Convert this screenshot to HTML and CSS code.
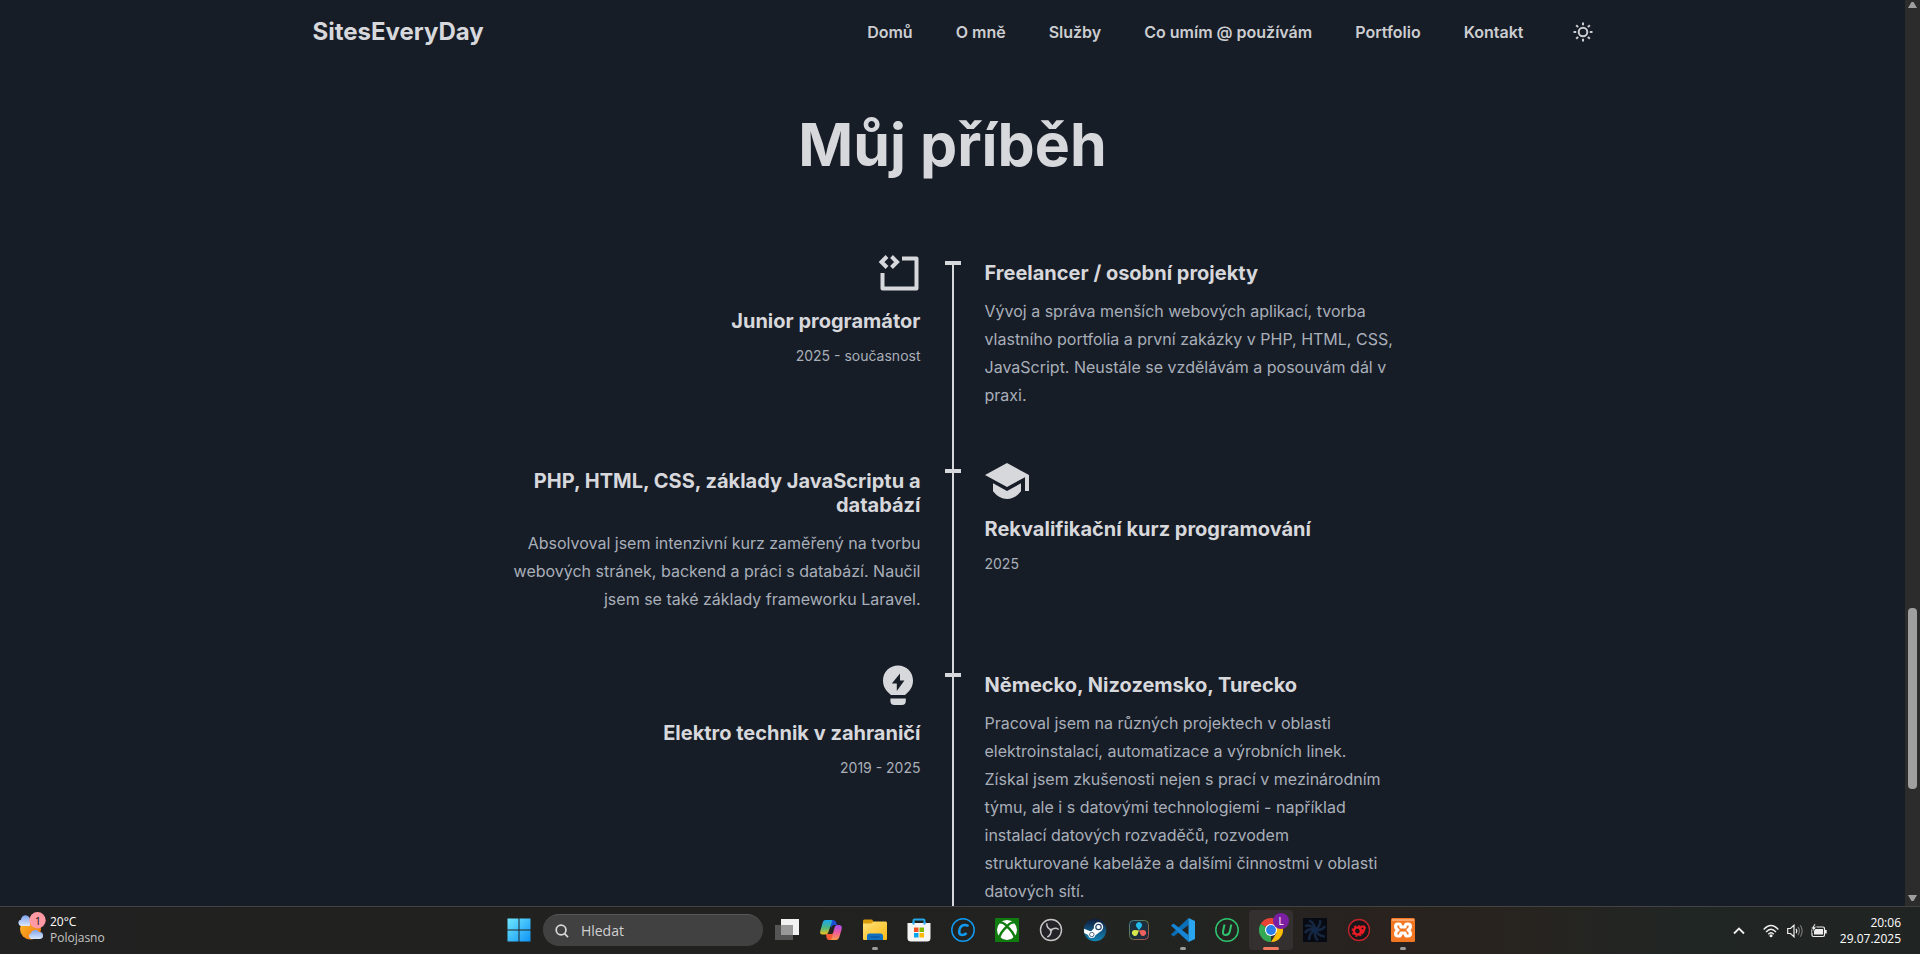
FILE: index.html
```html
<!DOCTYPE html>
<html lang="cs">
<head>
<meta charset="utf-8">
<title>SitesEveryDay</title>
<link rel="stylesheet" href="styles.css">
</head>
<body>
<div class="window">
  <div class="page">
    <header class="header">
      <a class="brand" href="#">SitesEveryDay</a>
      <nav class="nav">
        <a href="#">Domů</a>
        <a href="#">O mně</a>
        <a href="#">Služby</a>
        <a href="#">Co umím @ používám</a>
        <a href="#">Portfolio</a>
        <a href="#">Kontakt</a>
      </nav>
      <button class="theme" type="button" aria-label="Světlý režim">
        <svg width="20" height="20" viewBox="0 0 20 20" fill="none" stroke="currentColor" stroke-width="2"><circle cx="10" cy="10" r="4.3"/><path d="M10 .5v2.7M10 16.8v2.7M.5 10h2.7M16.8 10h2.7M3.2 3.2l1.9 1.9M14.9 14.9l1.9 1.9M3.2 16.8l1.9-1.9M14.9 5.1l1.9-1.9"/></svg>
      </button>
    </header>
    <main>
      <h1 class="title">Můj příběh</h1>
      <div class="timeline">
        <section class="row">
          <div class="side side-left">
            <svg class="icon" viewBox="0 0 44 48"><path fill="none" stroke="currentColor" stroke-width="4" stroke-linejoin="round" d="M25 9.500H39.500V39.500H5.500V24"/><path fill="none" stroke="currentColor" stroke-width="4" d="M10 7.500L4.500 13L10 18.500M14.500 7.500L20 13L14.500 18.500"/></svg>
            <h3>Junior programátor</h3>
            <p class="date">2025 - současnost</p>
          </div>
          <div class="side">
            <h3>Freelancer / osobní projekty</h3>
            <p class="text">Vývoj a správa menších webových aplikací, tvorba<br>vlastního portfolia a první zakázky v PHP, HTML, CSS,<br>JavaScript. Neustále se vzdělávám a posouvám dál v<br>praxi.</p>
          </div>
        </section>
        <section class="row">
          <div class="side side-left">
            <h3>PHP, HTML, CSS, základy JavaScriptu a<br>databází</h3>
            <p class="text">Absolvoval jsem intenzivní kurz zaměřený na tvorbu<br>webových stránek, backend a práci s databází. Naučil<br>jsem se také základy frameworku Laravel.</p>
          </div>
          <div class="side">
            <svg class="icon" viewBox="1 0 22 24"><path fill="currentColor" d="M5 13.180v4Q8 21 12 21t7-3.820v-4L12 17l-7-3.820zM12 3L1 9l11 6 9-4.910V17h2V9L12 3z"/></svg>
            <h3>Rekvalifikační kurz programování</h3>
            <p class="date">2025</p>
          </div>
        </section>
        <section class="row">
          <div class="side side-left">
            <svg class="icon" viewBox="1 0 22 24"><path fill="currentColor" fill-rule="evenodd" d="M11.500 2.200c-4.200 0-7.500 3.300-7.500 7.500 0 3.200 1.700 5.300 4 7.300h7c2.300-2 4-4.100 4-7.300 0-4.200-3.300-7.500-7.500-7.500zM12.500 6.300v3.400h2.200L10.900 15v-3.700H8.400zM7.700 18.800h7.700v1.200a2 2 0 0 1-2 2h-3.700a2 2 0 0 1-2-2z"/></svg>
            <h3>Elektro technik v zahraničí</h3>
            <p class="date">2019 - 2025</p>
          </div>
          <div class="side">
            <h3>Německo, Nizozemsko, Turecko</h3>
            <p class="text">Pracoval jsem na různých projektech v oblasti<br>elektroinstalací, automatizace a výrobních linek.<br>Získal jsem zkušenosti nejen s prací v mezinárodním<br>týmu, ale i s datovými technologiemi - například<br>instalací datových rozvaděčů, rozvodem<br>strukturované kabeláže a dalšími činnostmi v oblasti<br>datových sítí.</p>
          </div>
        </section>
      </div>
    </main>
  </div>
  <div class="scrollbar">
    <svg width="9" height="7" viewBox="0 0 9 7"><path d="M0 7L3.500 1h2L9 7z"/></svg>
    <div class="track"><div class="thumb"></div></div>
    <svg width="9" height="7" viewBox="0 0 9 7"><path d="M0 0L3.500 6h2L9 0z"/></svg>
  </div>
</div>
<footer class="taskbar">
  <button class="weather" type="button">
    <svg width="28" height="28" viewBox="0 0 28 28">
      <defs>
        <linearGradient id="sun" x1="0" y1="0" x2="1" y2="1"><stop offset="0" stop-color="#fbbf2b"/><stop offset="1" stop-color="#f0700c"/></linearGradient>
        <linearGradient id="cloud" x1="0" y1="0" x2="0" y2="1"><stop offset="0" stop-color="#7fa3ee"/><stop offset="1" stop-color="#dbe7fc"/></linearGradient>
      </defs>
      <circle cx="12.500" cy="17" r="10.500" fill="url(#sun)"/>
      <path fill="url(#cloud)" d="M3 14a3.200 3.200 0 0 1 0-6.300A4.500 4.500 0 0 1 12 8v6z"/>
      <path fill="url(#cloud)" d="M13 27a3.200 3.200 0 0 1 0-6A4.400 4.400 0 0 1 21 20a3.500 3.500 0 0 1 1 7z"/>
      <circle cx="19.500" cy="8.300" r="8.200" fill="#ff99a4"/>
      <text class="badge" x="20" y="12.500" text-anchor="middle">1</text>
    </svg>
    <span class="weather-text"><span class="temp">20°C</span><span class="sky">Polojasno</span></span>
  </button>
  <div class="apps">
    <button class="app" type="button" aria-label="Start">
      <svg viewBox="0 0 24 24"><defs><linearGradient id="win" x1="0" y1="0" x2="1" y2="1" gradientUnits="objectBoundingBox"><stop offset="0" stop-color="#6fe8ff"/><stop offset="1" stop-color="#0f93f5"/></linearGradient></defs><path fill="url(#win)" d="M.5.500h11v11h-11zM12.500.500h11v11h-11zM.5 12.500h11v11h-11zM12.500 12.500h11v11h-11z"/></svg>
    </button>
    <label class="search">
      <svg width="16" height="16" viewBox="0 0 16 16" fill="none" stroke="#d8d8d8" stroke-width="2"><circle cx="7" cy="6.800" r="5.600"/><path d="M11 11l4 4"/></svg>
      <input type="text" placeholder="Hledat" aria-label="Hledat">
    </label>
    <button class="app" type="button" aria-label="Zobrazení úloh">
      <svg viewBox="0 0 24 24"><path fill="#f1f1f1" d="M6 1h18v16H6z"/><path fill="#555" d="M0 7h18v15H0z"/><path fill="#999" d="M6 7h12v10H6z"/></svg>
    </button>
    <button class="app" type="button" aria-label="Copilot">
      <svg viewBox="0 0 24 24"><defs><linearGradient id="cpa" x1="0" y1="0" x2="0" y2="1"><stop offset="0" stop-color="#18a7ee"/><stop offset=".55" stop-color="#4fb67d"/><stop offset="1" stop-color="#f4c21c"/></linearGradient><linearGradient id="cpb" x1="0" y1="0" x2="0" y2="1"><stop offset="0" stop-color="#a24df0"/><stop offset=".5" stop-color="#ee5c9c"/><stop offset="1" stop-color="#fa9d45"/></linearGradient></defs><path fill="#1b51d6" d="M8 2h6q2.500 0 3.200 2.500L18 7h-3q-2 0-2.800 2.500z"/><path fill="url(#cpa)" d="M6 2h6.500q1 .3.500 1.500L9.500 14Q8.700 16.500 6 16.500H3.500Q.5 16.500 1.300 13L3.500 5Q4.300 2 6 2z"/><path fill="#f55a35" d="M7 16h6l3-3-3 9h-3q-2 0-2.500-2.500z"/><path fill="url(#cpb)" d="M18 7h2.500q3 .5 2.200 4L20.500 18.500Q19.500 22 17 22h-6q1.500-.5 2-2.500L15.500 9.500Q16.200 7 18 7z"/></svg>
    </button>
    <button class="app" type="button" aria-label="Průzkumník souborů">
      <svg viewBox="0 0 24 24"><defs><linearGradient id="fold" x1="0" y1="0" x2="1" y2="1"><stop offset="0" stop-color="#ffe27a"/><stop offset="1" stop-color="#f9b916"/></linearGradient></defs><path fill="#d99a0b" d="M1 1.500h8l2 2.500h12v4H0V2.500z"/><path fill="url(#fold)" d="M0 5.500h8l3-2h12l1 1V21q0 1-1 1H1q-1 0-1-1z"/><path fill="#0f6fc0" d="M4 22v-4q0-2.500 2.500-2.500h11Q20 15.500 20 18v4z"/><path stroke="#0a4f93" d="M7.500 19h9"/></svg><i class="dot"></i>
    </button>
    <button class="app" type="button" aria-label="Microsoft Store">
      <svg viewBox="0 0 24 24"><path fill="none" stroke="#24a8e8" stroke-width="2" d="M6.500 7V2.500Q6.500 1.500 7.500 1.500h9q1 0 1 1V7"/><path fill="#f5f5f5" d="M.5 5h23v15q0 3.500-3.500 3.500H4Q.5 23.500.5 20z"/><path fill="none" stroke="#24a8e8" stroke-width="2" d="M6.500 4v2.500M17.500 4v2.500"/><path fill="#f25022" d="M7 9.500h4.500V14H7z"/><path fill="#7fba00" d="M12.500 9.500H17V14h-4.500z"/><path fill="#00a4ef" d="M7 15h4.500v4.500H7z"/><path fill="#ffb900" d="M12.500 15H17v4.500h-4.500z"/></svg>
    </button>
    <button class="app" type="button" aria-label="Cleaner">
      <svg viewBox="0 0 24 24" fill="none" stroke="#119af0"><circle cx="12" cy="12" r="11.200" stroke-width="1.500"/><path stroke-width="2.600" d="M17 8.500Q16.500 7 14 7Q9.800 7 8.500 11.500Q7.300 17 11 17Q14 17 15.500 15"/></svg>
    </button>
    <button class="app" type="button" aria-label="Xbox">
      <svg viewBox="0 0 24 24"><rect width="24" height="24" rx="1" fill="#107c10"/><circle cx="12" cy="12" r="10" fill="#fff"/><path fill="none" stroke="#107c10" stroke-width="2.300" d="M4.500 4.500Q8 4 12 8.300Q16 4 19.500 4.500M4 20.500Q5.500 14 12 8.500Q18.500 14 20 20.500"/></svg>
    </button>
    <button class="app" type="button" aria-label="OBS Studio">
      <svg viewBox="0 0 24 24"><circle cx="12" cy="12" r="10.500" fill="#242327" stroke="#c7c7c7" stroke-width="1.400"/><g fill="none" stroke="#c7c7c7" stroke-width="1.400"><path d="M12 12Q7.500 10 7.800 5.300"/><path d="M12 12Q15.800 8.800 19.800 11.500"/><path d="M12 12Q12.500 17 8.300 19"/></g><circle cx="12" cy="12" r="1.500" fill="#c7c7c7"/></svg>
    </button>
    <button class="app" type="button" aria-label="Steam">
      <svg viewBox="0 0 24 24"><defs><linearGradient id="steam" x1="0" y1="0" x2="0" y2="1"><stop offset="0" stop-color="#101b3d"/><stop offset="1" stop-color="#1387b8"/></linearGradient></defs><circle cx="12" cy="12" r="11.300" fill="url(#steam)"/><path fill="#fff" d="M1 10.800L8 13.500L12 9L18 13L11.500 18L6 17.500L1.200 15z"/><circle cx="15.500" cy="9" r="4.700" fill="#fff"/><circle cx="15.500" cy="9" r="2.700" fill="none" stroke="#26466f" stroke-width="1.200"/><circle cx="8.800" cy="16.500" r="3.500" fill="#fff"/><circle cx="8.800" cy="16.500" r="2.200" fill="none" stroke="#26466f" stroke-width=".8"/></svg>
    </button>
    <button class="app" type="button" aria-label="DaVinci Resolve">
      <svg viewBox="0 0 24 24"><defs><linearGradient id="dv" x1="0" y1="0" x2="1" y2="1"><stop offset="0" stop-color="#3f7f9e"/><stop offset=".5" stop-color="#667a3c"/><stop offset="1" stop-color="#c6455a"/></linearGradient></defs><rect x="2.500" y="2.500" width="19" height="19" rx="4" fill="#1d2f3d" stroke="url(#dv)"/><path fill="#22b8e8" d="M12 12.200L9.600 9A3 3 0 1 1 14.400 9z"/><path fill="#d7e64a" d="M12 12.500L10.400 16.500A3 3 0 1 1 8 12z"/><path fill="#f0605f" d="M12 12.500L13.600 16.500A3 3 0 1 0 16 12z"/></svg>
    </button>
    <button class="app" type="button" aria-label="Visual Studio Code">
      <svg viewBox="0 0 24 24"><path fill="#0b6fb8" d="M0 16.500L17.500 0v7L2.500 18.500z"/><path fill="#1685d3" d="M0 7.500L17.500 24v-7L2.500 5.500z"/><path fill="#2aa5f0" d="M17.500 0L24 3v18l-6.500 3z"/></svg><i class="dot"></i>
    </button>
    <button class="app" type="button" aria-label="Uninstaller">
      <svg viewBox="0 0 24 24" fill="none" stroke="#2fc36d"><circle cx="12" cy="12" r="11.200" stroke-width="1.500"/><path stroke-width="2" d="M9.500 6.500L8 13.500Q7.500 17 10.800 17Q14 17 14.800 13.500L16.300 6.500"/></svg>
    </button>
    <button class="app app-active" type="button" aria-label="Google Chrome">
      <svg viewBox="0 0 24 24"><path fill="#ea4335" d="M12 12L1.600 6A12 12 0 0 1 22.400 6z"/><path fill="#34a853" d="M12 12L12 24A12 12 0 0 1 1.600 6z"/><path fill="#fbbc05" d="M12 12L22.400 6A12 12 0 0 1 12 24L17.500 15z"/><circle cx="12" cy="12" r="6" fill="#fff"/><circle cx="12" cy="12" r="4.900" fill="#2b7de9"/></svg>
      <span class="profile">L</span><i class="bar"></i>
    </button>
    <button class="app" type="button" aria-label="Fan Control">
      <svg viewBox="0 0 24 24"><rect width="24" height="24" rx="1" fill="#070a12"/><g fill="none" stroke="#17263f" stroke-width="2.600"><path d="M12 12Q12 5 6 2.500M12 12Q18 8 17 2M12 12Q19 13 22 8M12 12Q15 18 22 18.500M12 12Q11 19 15 22.500M12 12Q6 15 6 22M12 12Q5 10 2 15M12 12Q8 6 2 8"/></g><circle cx="12" cy="12" r="3.200" fill="#122848"/></svg>
    </button>
    <button class="app" type="button" aria-label="Game Booster">
      <svg viewBox="0 0 24 24"><circle cx="12" cy="12" r="10.500" fill="#17171a" stroke="#c4222b" stroke-width="1.300"/><circle cx="10.500" cy="13" r="3.600" fill="none" stroke="#ed1c24" stroke-width="2.400"/><circle cx="10.500" cy="13" r="5.300" fill="none" stroke="#ed1c24" stroke-width="1.400" stroke-dasharray="2 2.160"/><path fill="#ed1c24" d="M11.500 10.500L14 7.500h3.500l1.500 2-1.500 4.500-2.500 3-1.500-3z"/><circle cx="15.500" cy="10.500" r="1" fill="#17171a"/></svg>
    </button>
    <button class="app" type="button" aria-label="XAMPP">
      <svg viewBox="0 0 24 24"><rect width="24" height="24" rx="1.500" fill="#f37623"/><path fill="#f9a36b" d="M1 1h22v2H1z"/><path fill="none" stroke="#fff" stroke-width="3.200" stroke-linejoin="round" d="M7 12Q4.600 10.500 4.600 8.200Q4.600 6 7 6H8Q9.700 6 10 9H14Q14.300 6 16 6H17Q19.400 6 19.400 8.200Q19.400 10.500 17 12Q19.400 13.500 19.400 15.800Q19.400 18 17 18H16Q14.300 18 14 15H10Q9.700 18 8 18H7Q4.600 18 4.600 15.800Q4.600 13.500 7 12z"/></svg><i class="dot"></i>
    </button>
  </div>
  <div class="tray">
    <svg width="12" height="8" viewBox="0 0 12 8" fill="none" stroke="#eee" stroke-width="1.800"><path d="M1 6.500l5-5 5 5"/></svg>
    <div class="status">
      <svg width="16" height="14" viewBox="0 0 16 14" fill="none" stroke="#eee" stroke-width="1.300"><path d="M.7 5.500Q8-2.500 15.300 5.500M3 8Q8 2.500 13 8M5.300 10.300Q8 7.200 10.700 10.300"/><circle cx="8" cy="11.800" r="1.500" fill="#eee" stroke="none"/></svg>
      <svg width="16" height="14" viewBox="0 0 16 14" fill="none" stroke="#eee" stroke-width="1.200"><path d="M.7 4.500h2.800L7 1.200v11.600L3.500 9.500H.7zM9 4.800Q10.500 7 9 9.200"/><path stroke="#777" d="M11 2.800Q13.800 7 11 11.200M13.300 1.200Q17 7 13.300 12.800"/></svg>
      <svg width="16" height="14" viewBox="0 0 16 14"><rect x="1" y="3" width="12.500" height="9.500" rx="1.500" fill="none" stroke="#eee" stroke-width="1.200"/><path fill="#eee" d="M3 5h9v5.500H3zM14 6h1.700v3.500H14z"/><path fill="#eee" stroke="#202423" stroke-width=".8" d="M3.500-.5L0 5H2L1.500 8.500l4-5.500H3.500L5-.5z"/></svg>
    </div>
    <div class="clock"><span>20:06</span><span>29.07.2025</span></div>
  </div>
</footer>
</body>
</html>
```
FILE: styles.css
```css
* { box-sizing: border-box; }
body {
  margin: 0;
  height: 100vh;
  display: flex;
  flex-direction: column;
  overflow: hidden;
  background: #171d27;
  color: #d7d8dc;
  font-family: Inter, "Noto Sans", sans-serif;
}
h1, h3, p { margin: 0; }
a { color: inherit; text-decoration: none; }
button { border: 0; padding: 0; background: none; color: inherit; font: inherit; }

.window { flex: 1; min-height: 0; display: flex; }
.page { flex: 1; overflow: hidden; }

.header {
  display: flex;
  align-items: center;
  max-width: 1280px;
  height: 64px;
  margin: 0 auto;
}
.brand { margin-right: auto; font-size: 24px; font-weight: 700; line-height: 32px; }
.nav { display: flex; gap: 43px; font-size: 16px; font-weight: 600; line-height: 24px; white-space: nowrap; color: #cccdd1; }
.theme { display: flex; margin-left: 49px; color: #cccdd1; }

.title {
  margin: 50px 0 86px;
  text-align: center;
  font-size: 59px;
  font-weight: 700;
  line-height: 61px;
}
.timeline {
  position: relative;
  display: grid;
  gap: 60px;
  max-width: 896px;
  margin: 0 auto;
}
.timeline::before {
  content: "";
  position: absolute;
  top: 0;
  bottom: -60px;
  left: calc(50% - 1px);
  width: 2px;
  background: #d7d8dc;
}
.row { position: relative; display: grid; grid-template-columns: 1fr 1fr; gap: 64px; }
.row::before {
  content: "";
  position: absolute;
  top: 0;
  left: calc(50% - 8px);
  width: 16px;
  height: 4px;
  background: #d7d8dc;
}
.side { white-space: nowrap; }
.side-left { display: flex; flex-direction: column; align-items: flex-end; text-align: right; }
.icon { display: block; width: 44px; height: 48px; margin: -12px 0 12px; }
.side h3 { font-size: 20px; font-weight: 700; line-height: 24px; }
.text { margin-top: 12px; font-size: 16px; line-height: 28px; color: #a9afb9; }
.date { margin-top: 12px; font-size: 14px; line-height: 22px; color: #a9afb9; }

.scrollbar {
  width: 15px;
  display: flex;
  flex-direction: column;
  align-items: center;
  padding: 1px 0 4px;
  background: #2c2c2c;
}
.scrollbar svg { fill: #9f9f9f; }
.track { flex: 1; width: 9px; padding: 0; display: flex; flex-direction: column; }
.track::before { content: ""; flex: 600; }
.track::after { content: ""; flex: 106; }
.thumb { flex: 181; border-radius: 4px; background: #9f9f9f; }

.taskbar {
  display: grid;
  grid-template-columns: 1fr auto 1fr;
  height: 48px;
  border-top: 1px solid #424242;
  background: linear-gradient(90deg, #212121, #21211f 40%, #222421 62%, #29221f 72%, #28231f 78%, #202624 88%, #202423);
  font-family: "Open Sans", "Noto Sans", sans-serif;
  font-size: 12px;
  line-height: 16px;
  color: #fff;
}
.weather { display: flex; gap: 4px; padding: 5px 0 0 18px; text-align: left; }
.weather-text { display: flex; flex-direction: column; padding-top: 2px; }
.sky { color: #c5c5c5; }
.badge { font-size: 11px; fill: #111; }
.apps { display: flex; align-items: center; padding: 0 0 1px 2px; }
.app { position: relative; width: 44px; height: 40px; display: flex; align-items: center; justify-content: center; }
.app svg { width: 24px; height: 24px; }
.app-active { border-radius: 4px; background: #34302f; }
.dot, .bar { position: absolute; bottom: 0; left: 50%; height: 3px; border-radius: 2px; }
.dot { width: 6px; margin-left: -3px; background: #9b9b9b; }
.bar { width: 16px; margin-left: -8px; background: #f1795f; }
.profile {
  position: absolute;
  top: 3px;
  right: 4px;
  width: 16px;
  height: 16px;
  border-radius: 50%;
  background: #7b1fa2;
  font-size: 10px;
  text-align: center;
}
.search {
  display: flex;
  align-items: center;
  gap: 12px;
  width: 220px;
  height: 32px;
  margin: 0 2px;
  padding: 0 12px;
  border-radius: 16px;
  border-top: 1px solid #565656;
  background: #414141;
}
.search input { width: 100%; border: 0; padding: 0; outline: 0; background: none; color: #d0d0d0; font: 14px/20px "Open Sans", sans-serif; }
.search input::placeholder { color: #d0d0d0; }
.tray { display: flex; justify-content: flex-end; align-items: center; padding-right: 19px; }
.status { display: flex; gap: 8px; margin: 0 13px 0 18px; }
.clock { display: flex; flex-direction: column; text-align: right; }
```
